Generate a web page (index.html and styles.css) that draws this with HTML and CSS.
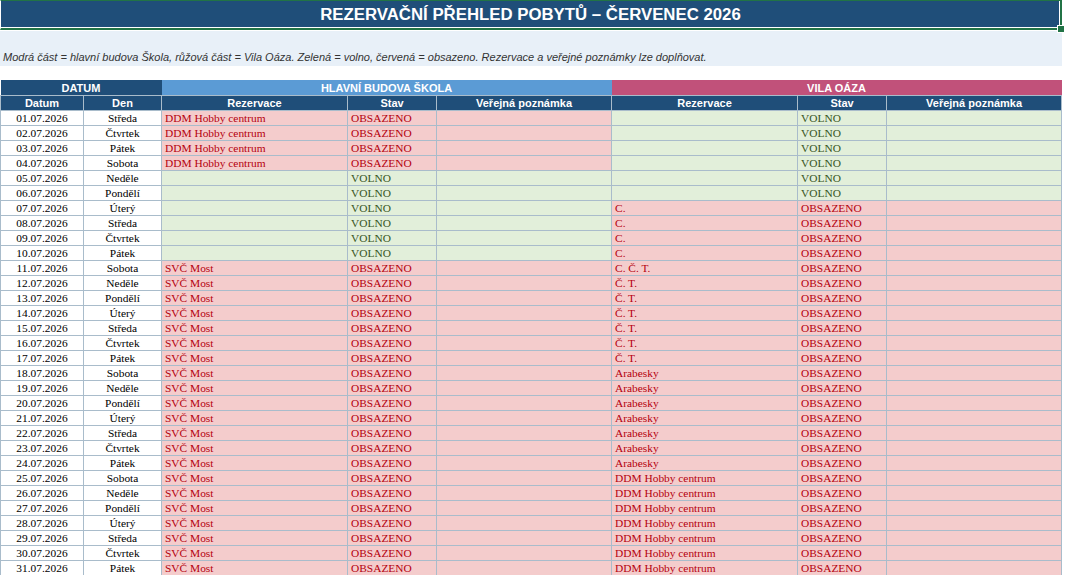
FILE: index.html
```html
<!DOCTYPE html>
<html lang="cs">
<head>
<meta charset="utf-8">
<title>Rezervační přehled pobytů – červenec 2026</title>
<link rel="stylesheet" href="styles.css">
</head>
<body>
<div class="sheet">
  <div class="title">REZERVAČNÍ PŘEHLED POBYTŮ – ČERVENEC 2026<span class="handle"></span></div>
  <div class="note">Modrá část = hlavní budova Škola, růžová část = Vila Oáza. Zelená = volno, červená = obsazeno. Rezervace a veřejné poznámky lze doplňovat.</div>
  <table class="grid">
    <colgroup>
      <col class="c-date"><col class="c-day">
      <col class="c-rez"><col class="c-stav"><col class="c-pozn">
      <col class="c-rez"><col class="c-stav"><col class="c-pozn">
    </colgroup>
    <thead>
      <tr class="grp">
        <th colspan="2" class="g-date">DATUM</th>
        <th colspan="3" class="g-hb">HLAVNÍ BUDOVA ŠKOLA</th>
        <th colspan="3" class="g-vila">VILA OÁZA</th>
      </tr>
      <tr class="cols">
        <th>Datum</th><th>Den</th>
        <th>Rezervace</th><th>Stav</th><th>Veřejná poznámka</th>
        <th>Rezervace</th><th>Stav</th><th>Veřejná poznámka</th>
      </tr>
    </thead>
    <tbody>
      <tr><td class="d">01.07.2026</td><td class="d">Středa</td><td class="o">DDM Hobby centrum</td><td class="o">OBSAZENO</td><td class="o"></td><td class="v"></td><td class="v">VOLNO</td><td class="v"></td></tr>
      <tr><td class="d">02.07.2026</td><td class="d">Čtvrtek</td><td class="o">DDM Hobby centrum</td><td class="o">OBSAZENO</td><td class="o"></td><td class="v"></td><td class="v">VOLNO</td><td class="v"></td></tr>
      <tr><td class="d">03.07.2026</td><td class="d">Pátek</td><td class="o">DDM Hobby centrum</td><td class="o">OBSAZENO</td><td class="o"></td><td class="v"></td><td class="v">VOLNO</td><td class="v"></td></tr>
      <tr><td class="d">04.07.2026</td><td class="d">Sobota</td><td class="o">DDM Hobby centrum</td><td class="o">OBSAZENO</td><td class="o"></td><td class="v"></td><td class="v">VOLNO</td><td class="v"></td></tr>
      <tr><td class="d">05.07.2026</td><td class="d">Neděle</td><td class="v"></td><td class="v">VOLNO</td><td class="v"></td><td class="v"></td><td class="v">VOLNO</td><td class="v"></td></tr>
      <tr><td class="d">06.07.2026</td><td class="d">Pondělí</td><td class="v"></td><td class="v">VOLNO</td><td class="v"></td><td class="v"></td><td class="v">VOLNO</td><td class="v"></td></tr>
      <tr><td class="d">07.07.2026</td><td class="d">Úterý</td><td class="v"></td><td class="v">VOLNO</td><td class="v"></td><td class="o">C.</td><td class="o">OBSAZENO</td><td class="o"></td></tr>
      <tr><td class="d">08.07.2026</td><td class="d">Středa</td><td class="v"></td><td class="v">VOLNO</td><td class="v"></td><td class="o">C.</td><td class="o">OBSAZENO</td><td class="o"></td></tr>
      <tr><td class="d">09.07.2026</td><td class="d">Čtvrtek</td><td class="v"></td><td class="v">VOLNO</td><td class="v"></td><td class="o">C.</td><td class="o">OBSAZENO</td><td class="o"></td></tr>
      <tr><td class="d">10.07.2026</td><td class="d">Pátek</td><td class="v"></td><td class="v">VOLNO</td><td class="v"></td><td class="o">C.</td><td class="o">OBSAZENO</td><td class="o"></td></tr>
      <tr><td class="d">11.07.2026</td><td class="d">Sobota</td><td class="o">SVČ Most</td><td class="o">OBSAZENO</td><td class="o"></td><td class="o">C. Č. T.</td><td class="o">OBSAZENO</td><td class="o"></td></tr>
      <tr><td class="d">12.07.2026</td><td class="d">Neděle</td><td class="o">SVČ Most</td><td class="o">OBSAZENO</td><td class="o"></td><td class="o">Č. T.</td><td class="o">OBSAZENO</td><td class="o"></td></tr>
      <tr><td class="d">13.07.2026</td><td class="d">Pondělí</td><td class="o">SVČ Most</td><td class="o">OBSAZENO</td><td class="o"></td><td class="o">Č. T.</td><td class="o">OBSAZENO</td><td class="o"></td></tr>
      <tr><td class="d">14.07.2026</td><td class="d">Úterý</td><td class="o">SVČ Most</td><td class="o">OBSAZENO</td><td class="o"></td><td class="o">Č. T.</td><td class="o">OBSAZENO</td><td class="o"></td></tr>
      <tr><td class="d">15.07.2026</td><td class="d">Středa</td><td class="o">SVČ Most</td><td class="o">OBSAZENO</td><td class="o"></td><td class="o">Č. T.</td><td class="o">OBSAZENO</td><td class="o"></td></tr>
      <tr><td class="d">16.07.2026</td><td class="d">Čtvrtek</td><td class="o">SVČ Most</td><td class="o">OBSAZENO</td><td class="o"></td><td class="o">Č. T.</td><td class="o">OBSAZENO</td><td class="o"></td></tr>
      <tr><td class="d">17.07.2026</td><td class="d">Pátek</td><td class="o">SVČ Most</td><td class="o">OBSAZENO</td><td class="o"></td><td class="o">Č. T.</td><td class="o">OBSAZENO</td><td class="o"></td></tr>
      <tr><td class="d">18.07.2026</td><td class="d">Sobota</td><td class="o">SVČ Most</td><td class="o">OBSAZENO</td><td class="o"></td><td class="o">Arabesky</td><td class="o">OBSAZENO</td><td class="o"></td></tr>
      <tr><td class="d">19.07.2026</td><td class="d">Neděle</td><td class="o">SVČ Most</td><td class="o">OBSAZENO</td><td class="o"></td><td class="o">Arabesky</td><td class="o">OBSAZENO</td><td class="o"></td></tr>
      <tr><td class="d">20.07.2026</td><td class="d">Pondělí</td><td class="o">SVČ Most</td><td class="o">OBSAZENO</td><td class="o"></td><td class="o">Arabesky</td><td class="o">OBSAZENO</td><td class="o"></td></tr>
      <tr><td class="d">21.07.2026</td><td class="d">Úterý</td><td class="o">SVČ Most</td><td class="o">OBSAZENO</td><td class="o"></td><td class="o">Arabesky</td><td class="o">OBSAZENO</td><td class="o"></td></tr>
      <tr><td class="d">22.07.2026</td><td class="d">Středa</td><td class="o">SVČ Most</td><td class="o">OBSAZENO</td><td class="o"></td><td class="o">Arabesky</td><td class="o">OBSAZENO</td><td class="o"></td></tr>
      <tr><td class="d">23.07.2026</td><td class="d">Čtvrtek</td><td class="o">SVČ Most</td><td class="o">OBSAZENO</td><td class="o"></td><td class="o">Arabesky</td><td class="o">OBSAZENO</td><td class="o"></td></tr>
      <tr><td class="d">24.07.2026</td><td class="d">Pátek</td><td class="o">SVČ Most</td><td class="o">OBSAZENO</td><td class="o"></td><td class="o">Arabesky</td><td class="o">OBSAZENO</td><td class="o"></td></tr>
      <tr><td class="d">25.07.2026</td><td class="d">Sobota</td><td class="o">SVČ Most</td><td class="o">OBSAZENO</td><td class="o"></td><td class="o">DDM Hobby centrum</td><td class="o">OBSAZENO</td><td class="o"></td></tr>
      <tr><td class="d">26.07.2026</td><td class="d">Neděle</td><td class="o">SVČ Most</td><td class="o">OBSAZENO</td><td class="o"></td><td class="o">DDM Hobby centrum</td><td class="o">OBSAZENO</td><td class="o"></td></tr>
      <tr><td class="d">27.07.2026</td><td class="d">Pondělí</td><td class="o">SVČ Most</td><td class="o">OBSAZENO</td><td class="o"></td><td class="o">DDM Hobby centrum</td><td class="o">OBSAZENO</td><td class="o"></td></tr>
      <tr><td class="d">28.07.2026</td><td class="d">Úterý</td><td class="o">SVČ Most</td><td class="o">OBSAZENO</td><td class="o"></td><td class="o">DDM Hobby centrum</td><td class="o">OBSAZENO</td><td class="o"></td></tr>
      <tr><td class="d">29.07.2026</td><td class="d">Středa</td><td class="o">SVČ Most</td><td class="o">OBSAZENO</td><td class="o"></td><td class="o">DDM Hobby centrum</td><td class="o">OBSAZENO</td><td class="o"></td></tr>
      <tr><td class="d">30.07.2026</td><td class="d">Čtvrtek</td><td class="o">SVČ Most</td><td class="o">OBSAZENO</td><td class="o"></td><td class="o">DDM Hobby centrum</td><td class="o">OBSAZENO</td><td class="o"></td></tr>
      <tr><td class="d">31.07.2026</td><td class="d">Pátek</td><td class="o">SVČ Most</td><td class="o">OBSAZENO</td><td class="o"></td><td class="o">DDM Hobby centrum</td><td class="o">OBSAZENO</td><td class="o"></td></tr>
    </tbody>
  </table>
</div>
</body>
</html>
```
FILE: styles.css
```css
html, body {
  margin: 0;
  padding: 0;
  background: #ffffff;
}

.sheet {
  width: 1062px;
  font-family: "Liberation Sans", Arial, sans-serif;
}

.title {
  position: relative;
  box-sizing: border-box;
  height: 30px;
  background: #1f4e79;
  color: #ffffff;
  font-weight: bold;
  font-size: 16.8px;
  line-height: 27px;
  text-align: center;
  border-left: 1px solid #ffffff;
  border-top: 1px solid #217346;
  border-right: 2px solid #217346;
  border-bottom: 2px solid #217346;
  box-shadow: inset -1px -1px 0 #ffffff;
}

.handle {
  position: absolute;
  right: -5px;
  bottom: -5px;
  width: 6px;
  height: 6px;
  background: #217346;
  border: 1px solid #ffffff;
}

.note {
  box-sizing: border-box;
  height: 35px;
  margin-top: 1px;
  background: #e8f0f8;
  color: #333333;
  font-style: italic;
  font-size: 11px;
  line-height: 13px;
  padding: 20px 0 0 3px;
  white-space: nowrap;
}

.grid {
  margin-top: 14px;
  border-collapse: collapse;
  table-layout: fixed;
  width: 1061px;
}

.c-date { width: 83px; }
.c-day { width: 78px; }
.c-rez { width: 186px; }
.c-stav { width: 89px; }
.c-pozn { width: 175px; }

.grid th {
  height: 15px;
  padding: 0;
  color: #ffffff;
  font-weight: bold;
  font-size: 11px;
  line-height: 14px;
  text-align: center;
  white-space: nowrap;
  overflow: hidden;
}

.grp th {
  border: none;
}

.g-date { background: #1f4e79; }
.g-hb { background: #5b9bd5; }
.g-vila { background: #c1517a; }

.cols th {
  background: #1f4e79;
  border: 1px solid #a9bccb;
  height: 14px;
}

.grid td {
  height: 14px;
  padding: 1px 0 0 3px;
  box-sizing: border-box;
  border: 1px solid #a9bccb;
  font-family: "Liberation Serif", "Times New Roman", serif;
  font-size: 11.4px;
  line-height: 13px;
  white-space: nowrap;
  overflow: hidden;
}

.grid td.d {
  background: #ffffff;
  color: #000000;
  text-align: center;
  padding-left: 0;
}

.grid td.o {
  background: #f4cccc;
  color: #b4000e;
}

.grid td.v {
  background: #e2efda;
  color: #375623;
}
```
